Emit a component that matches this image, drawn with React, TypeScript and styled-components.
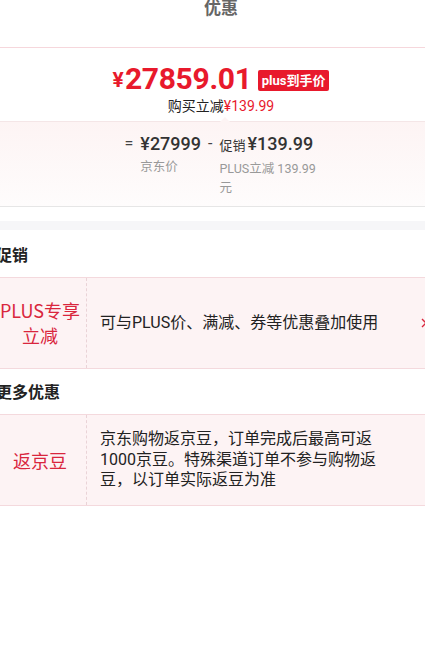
import React from 'react'
import styled, { createGlobalStyle } from 'styled-components'

const red = '#e8192c'
const labelRed = '#d9263d'
const font = `Roboto, "Noto Sans CJK SC", "Noto Sans", sans-serif`

const GlobalStyle = createGlobalStyle`
  html, body {
    margin: 0;
    padding: 0;
    background: #fff;
    overflow: hidden;
  }
  body {
    font-family: ${font};
    color: #222;
  }
`

const Panel = styled.div`
  width: 454px;
  margin-left: -6px;
  background: #fff;
`

const Header = styled.header`
  height: 48px;
  box-sizing: border-box;
  border-bottom: 1px solid #f6d7dc;
  text-align: center;
`

const Title = styled.h2`
  margin: 0;
  font-size: 17px;
  line-height: 16px;
  font-weight: 700;
  color: #666;
`

const PriceBlock = styled.section`
  padding: 13px 0 5px;
  text-align: center;
`

const PriceRow = styled.div`
  display: flex;
  justify-content: center;
  align-items: center;
  height: 34px;
  color: ${red};
  font-weight: 700;
`

const Yen = styled.span`
  font-size: 21px;
  margin-right: 1px;
  margin-top: 4px;
`

const Amount = styled.span`
  font-size: 30px;
  letter-spacing: -0.3px;
`

const Badge = styled.span`
  margin-left: 6px;
  margin-top: 4px;
  padding: 0 4px;
  height: 21px;
  line-height: 21px;
  border-radius: 2px;
  background: ${red};
  color: #fff;
  font-size: 13px;
  font-weight: 700;
`

const Saving = styled.div`
  height: 20px;
  line-height: 20px;
  margin-top: 1px;
  font-size: 14px;
  color: #222;

  em {
    font-style: normal;
    color: ${red};
  }
`

const Breakdown = styled.div`
  position: relative;
  display: flex;
  justify-content: center;
  align-items: flex-start;
  gap: 7px;
  padding: 11px 0 9px;
  border-top: 1px solid #f4e6e7;
  border-bottom: 1px solid #e6e6e6;
  background: linear-gradient(#fdf4f4, #fefcfc);

  &::before {
    content: '';
    position: absolute;
    top: -5px;
    left: 226px;
    border: 5px solid transparent;
    border-top: 0;
    border-bottom-color: #fdf4f4;
  }
`

const Operator = styled.span`
  font-size: 16px;
  line-height: 22px;
  color: #444;
`

const Term = styled.div<{ $wide?: boolean }>`
  display: flex;
  flex-direction: column;
  max-width: ${p => (p.$wide ? '98px' : 'none')};
`

const TermValue = styled.div`
  font-size: 18px;
  line-height: 22px;
  font-weight: 500;
  color: #333;
  white-space: nowrap;

  small {
    font-size: 13px;
    font-weight: 400;
    margin-right: 2px;
  }
`

const TermLabel = styled.div`
  margin-top: 2px;
  font-size: 12.5px;
  line-height: 19px;
  color: #999;
`

const Gap = styled.div`
  margin-top: 14px;
  height: 9px;
  background: #f6f6f8;
`

const Section = styled.section<{ $first?: boolean }>`
  padding-top: ${p => (p.$first ? '2px' : '0')};
`

const SectionTitle = styled.h3`
  margin: 0;
  padding: 13px 0 10px 2px;
  font-size: 16px;
  line-height: 22px;
  font-weight: 700;
  color: #222;
`

const Row = styled.div`
  display: flex;
  box-sizing: border-box;
  height: 92px;
  border-top: 1px solid #f4d9dd;
  border-bottom: 1px solid #f4d9dd;
  background: #fdf3f4;
`

const RowLabel = styled.div`
  flex: 0 0 92px;
  display: flex;
  align-items: center;
  justify-content: center;
  text-align: center;
  border-right: 1px dashed #ead3d7;
  color: ${labelRed};
  font-family: "Noto Sans CJK SC", sans-serif;
  font-size: 18px;
  line-height: 25px;
`

const RowBody = styled.div`
  flex: 1;
  display: flex;
  align-items: center;
  padding: 0 18px 0 13px;
`

const RowText = styled.p`
  flex: 1;
  margin: 0;
  font-size: 16px;
  line-height: 20.5px;
  color: #222;
`

const Chevron = styled.svg`
  flex: 0 0 12px;
  margin-left: 35px;
`

export default function App() {
  return (
    <>
      <GlobalStyle />
      <Panel>
        <Header>
          <Title>优惠</Title>
        </Header>

        <PriceBlock>
          <PriceRow>
            <Yen>¥</Yen>
            <Amount>27859.01</Amount>
            <Badge>plus到手价</Badge>
          </PriceRow>
          <Saving>
            购买立减<em>¥139.99</em>
          </Saving>
        </PriceBlock>

        <Breakdown>
          <Operator>=</Operator>
          <Term>
            <TermValue>¥27999</TermValue>
            <TermLabel>京东价</TermLabel>
          </Term>
          <Operator>-</Operator>
          <Term $wide>
            <TermValue>
              <small>促销</small>¥139.99
            </TermValue>
            <TermLabel>PLUS立减 139.99 元</TermLabel>
          </Term>
        </Breakdown>

        <Gap />

        <Section $first>
          <SectionTitle>促销</SectionTitle>
          <Row>
            <RowLabel>
              PLUS专享
              <br />
              立减
            </RowLabel>
            <RowBody>
              <RowText>可与PLUS价、满减、券等优惠叠加使用</RowText>
              <Chevron width="12" height="12" viewBox="0 0 12 12">
                <path d="M4 2l4 4-4 4" fill="none" stroke={labelRed} strokeWidth="1.4" />
              </Chevron>
            </RowBody>
          </Row>
        </Section>

        <Section>
          <SectionTitle>更多优惠</SectionTitle>
          <Row>
            <RowLabel>返京豆</RowLabel>
            <RowBody>
              <RowText>
                京东购物返京豆，订单完成后最高可返1000京豆。特殊渠道订单不参与购物返豆，以订单实际返豆为准
              </RowText>
              <Chevron width="12" height="12" viewBox="0 0 12 12" />
            </RowBody>
          </Row>
        </Section>
      </Panel>
    </>
  )
}
